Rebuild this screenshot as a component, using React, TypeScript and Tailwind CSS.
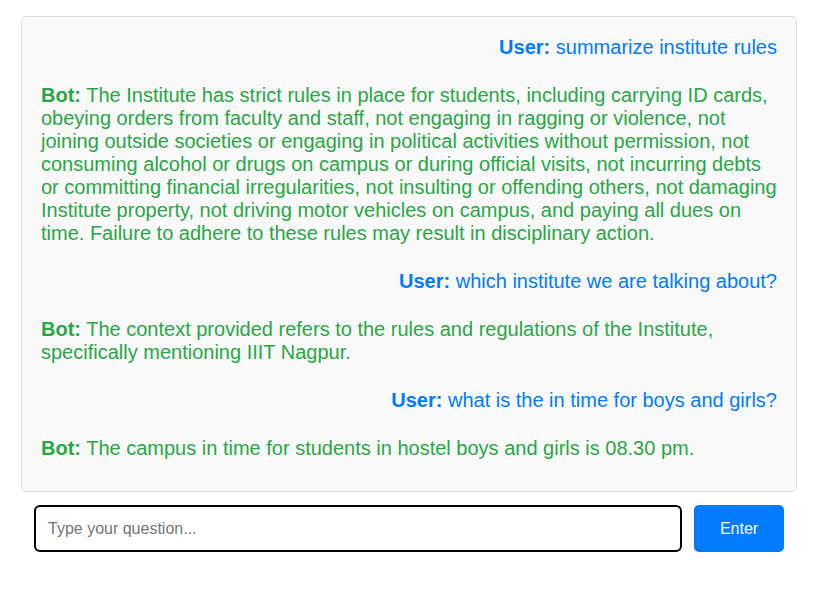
import React from "react";

const msgs: { who: "User" | "Bot"; text: string }[] = [
  { who: "User", text: "summarize institute rules" },
  {
    who: "Bot",
    text: "The Institute has strict rules in place for students, including carrying ID cards, obeying orders from faculty and staff, not engaging in ragging or violence, not joining outside societies or engaging in political activities without permission, not consuming alcohol or drugs on campus or during official visits, not incurring debts or committing financial irregularities, not insulting or offending others, not damaging Institute property, not driving motor vehicles on campus, and paying all dues on time. Failure to adhere to these rules may result in disciplinary action.",
  },
  { who: "User", text: "which institute we are talking about?" },
  {
    who: "Bot",
    text: "The context provided refers to the rules and regulations of the Institute, specifically mentioning IIIT Nagpur.",
  },
  { who: "User", text: "what is the in time for boys and girls?" },
  { who: "Bot", text: "The campus in time for students in hostel boys and girls is 08.30 pm." },
];

export default function App() {
  return (
    <div
      className="w-[822px] h-[590px] bg-white pt-4 pl-[21px]"
      style={{ fontFamily: '"Liberation Sans", Arial, sans-serif' }}
    >
      <div className="w-[776px]">
        <div className="border border-[#dddddd] bg-[#f9f9f9] rounded-[5px] px-[19px] pt-[19px] pb-[31px] flex flex-col gap-[25px] text-[20px] leading-[23px]">
          {msgs.map((m, i) =>
            m.who === "User" ? (
              <div key={i} className="text-right text-[#007bff]">
                <span className="font-bold">User:</span> {m.text}
              </div>
            ) : (
              <div key={i} className="text-left text-[#28a745]">
                <span className="font-bold">Bot:</span> {m.text}
              </div>
            )
          )}
        </div>
        <div className="flex gap-3 mt-[13px] px-[13px]">
          <input
            className="flex-1 h-[47px] border-2 border-black rounded-[6px] px-3 text-[16px] outline-none placeholder:text-[#757575]"
            placeholder="Type your question..."
            style={{ fontFamily: '"Liberation Sans", Arial, sans-serif' }}
          />
          <button className="w-[90px] h-[47px] bg-[#007bff] text-white rounded-[5px] text-[16px]">
            Enter
          </button>
        </div>
      </div>
    </div>
  );
}
